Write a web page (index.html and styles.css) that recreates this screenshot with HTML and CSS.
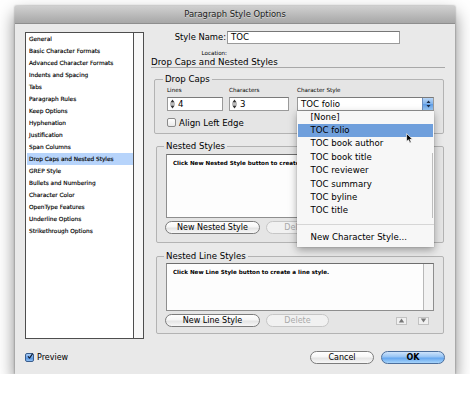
FILE: index.html
```html
<!DOCTYPE html>
<html>
<head>
<meta charset="utf-8">
<link rel="stylesheet" href="styles.css">
</head>
<body>
<div class="window">
  <div class="titlebar">Paragraph Style Options</div>
  <div class="content">
    <div class="sidebar">
      <ul class="list">
        <li>General</li>
        <li>Basic Character Formats</li>
        <li>Advanced Character Formats</li>
        <li>Indents and Spacing</li>
        <li>Tabs</li>
        <li>Paragraph Rules</li>
        <li>Keep Options</li>
        <li>Hyphenation</li>
        <li>Justification</li>
        <li>Span Columns</li>
        <li class="sel">Drop Caps and Nested Styles</li>
        <li>GREP Style</li>
        <li>Bullets and Numbering</li>
        <li>Character Color</li>
        <li>OpenType Features</li>
        <li>Underline Options</li>
        <li>Strikethrough Options</li>
      </ul>
      <div class="vscroll"></div>
    </div>
    <div class="main">
      <div class="name-row">
        <div class="name-label">Style Name:</div>
        <div class="text-input">TOC</div>
      </div>
      <div class="loc-row">Location:</div>
      <div class="heading">Drop Caps and Nested Styles</div>

      <fieldset class="group dropcaps">
        <legend>Drop Caps</legend>
        <div class="dc-inner">
          <div class="dc-row">
            <div class="dc-col col-lines">
              <div class="small-label">Lines</div>
              <div class="spin">
                <svg class="stepper" width="5" height="10" viewBox="0 0 5 10"><path d="M2.5 0.6 L0.3 3.6 L4.7 3.6 Z M2.5 9.4 L0.3 6.4 L4.7 6.4 Z" fill="#333"/><rect x="0" y="4.6" width="5" height="0.8" fill="#555"/></svg>
                <span class="spin-val">4</span>
              </div>
            </div>
            <div class="dc-col col-chars">
              <div class="small-label">Characters</div>
              <div class="spin">
                <svg class="stepper" width="5" height="10" viewBox="0 0 5 10"><path d="M2.5 0.6 L0.3 3.6 L4.7 3.6 Z M2.5 9.4 L0.3 6.4 L4.7 6.4 Z" fill="#333"/><rect x="0" y="4.6" width="5" height="0.8" fill="#555"/></svg>
                <span class="spin-val">3</span>
              </div>
            </div>
            <div class="dc-col col-style">
              <div class="small-label">Character Style</div>
              <div class="select">
                <span class="select-val">TOC folio</span>
                <span class="select-btn">
                  <svg width="5" height="8" viewBox="0 0 5 8"><path d="M2.5 0.5 L0.5 3 L4.5 3 Z M2.5 7.5 L0.5 5 L4.5 5 Z" fill="#1c2b45"/></svg>
                </span>
                <div class="menu">
                  <div class="mi">[None]</div>
                  <div class="mi hi">TOC folio</div>
                  <div class="mi">TOC book author</div>
                  <div class="mi">TOC book title</div>
                  <div class="mi">TOC reviewer</div>
                  <div class="mi">TOC summary</div>
                  <div class="mi">TOC byline</div>
                  <div class="mi">TOC title</div>
                  <div class="msep"></div>
                  <div class="mi mi-new">New Character Style...</div>
                  <div class="mscroll"></div>
                  <svg class="cursor" width="8" height="11" viewBox="0 0 8 11"><path d="M0.6 0.6 L0.6 8.6 L2.5 6.8 L3.9 9.9 L5.2 9.3 L3.9 6.3 L6.5 6.3 Z" fill="#000" stroke="#fff" stroke-width="0.7" stroke-linejoin="round"/></svg>
                </div>
              </div>
            </div>
          </div>
          <div class="check-row">
            <span class="checkbox"></span>
            <span>Align Left Edge</span>
          </div>
        </div>
      </fieldset>

      <fieldset class="group nested">
        <legend>Nested Styles</legend>
        <div class="listbox lb-nested">
          <div class="lb-text">Click New Nested Style button to create a nested style.</div>
          <div class="lb-scroll"></div>
        </div>
        <div class="btn-row">
          <span class="btn btn-new">New Nested Style</span>
          <span class="btn btn-del disabled">Delete</span>
          <span class="arrows">
            <span class="arrow-btn"><svg width="7" height="5" viewBox="0 0 7 5"><path d="M3.5 0.5 L0.8 4.5 L6.2 4.5 Z" fill="#777"/></svg></span>
            <span class="arrow-btn"><svg width="7" height="5" viewBox="0 0 7 5"><path d="M3.5 4.5 L0.8 0.5 L6.2 0.5 Z" fill="#777"/></svg></span>
          </span>
        </div>
      </fieldset>

      <fieldset class="group lines">
        <legend>Nested Line Styles</legend>
        <div class="listbox lb-lines">
          <div class="lb-text">Click New Line Style button to create a line style.</div>
          <div class="lb-scroll"></div>
        </div>
        <div class="btn-row">
          <span class="btn btn-new">New Line Style</span>
          <span class="btn btn-del disabled">Delete</span>
          <span class="arrows">
            <span class="arrow-btn"><svg width="7" height="5" viewBox="0 0 7 5"><path d="M3.5 0.5 L0.8 4.5 L6.2 4.5 Z" fill="#777"/></svg></span>
            <span class="arrow-btn"><svg width="7" height="5" viewBox="0 0 7 5"><path d="M3.5 4.5 L0.8 0.5 L6.2 0.5 Z" fill="#777"/></svg></span>
          </span>
        </div>
      </fieldset>
    </div>
  </div>
  <div class="footer">
    <span class="checkbox checked">
      <svg width="9" height="9" viewBox="0 0 9 9"><path d="M1.8 4.6 L3.8 7 L8.2 0.6" fill="none" stroke="#0d1a30" stroke-width="1.6" stroke-linecap="round" stroke-linejoin="round"/></svg>
    </span>
    <span class="preview-label">Preview</span>
    <span class="footer-buttons">
      <span class="btn btn-cancel">Cancel</span>
      <span class="btn btn-ok">OK</span>
    </span>
  </div>
</div>
</body>
</html>
```

FILE: styles.css
```css
* { box-sizing: border-box; }
html, body { margin: 0; padding: 0; background: #ffffff; }
body { font-family: "DejaVu Sans", "Liberation Sans", sans-serif; color: #000; }

.window {
  position: relative;
  margin: 6px 0 0 15px;
  width: 440px;
  height: 368px;
  background: #e9e9e9;
  box-shadow: 0 8px 16px rgba(0,0,0,0.5), 0 0 2px rgba(0,0,0,0.4);
  display: flex;
  flex-direction: column;
}

.titlebar {
  flex: none;
  height: 18px;
  background: linear-gradient(#d0d0d0, #a7a7a7);
  border-bottom: 1px solid #8e8e8e;
  font-size: 8.4px;
  line-height: 17px;
  text-align: center;
  color: #1c1c1c;
  text-shadow: 0 1px 0 rgba(255,255,255,0.45);
}

.content {
  flex: none;
  height: 315px;
  display: flex;
  align-items: flex-start;
}

/* sidebar list */
.sidebar {
  margin: 8px 0 0 10px;
  width: 119px;
  height: 307px;
  border: 1px solid #4e4e4e;
  background: #fff;
  display: flex;
}
.list { list-style: none; margin: 0; padding: 0; flex: 1; }
.list li {
  height: 12px;
  line-height: 12px;
  font-size: 5.8px;
  margin-left: 1px;
  padding-left: 2px;
  white-space: nowrap;
  -webkit-text-stroke: 0.15px #000;
}
.list li.sel { background: #b7d4fb; }
.vscroll { width: 10px; border-left: 1px solid #4e4e4e; background: #f7f7f7; }

/* main */
.main { margin-left: 7px; width: 294px; }

.name-row { margin-top: 7px; height: 13px; display: flex; }
.name-label {
  width: 76px;
  padding-right: 1px;
  text-align: right;
  font-size: 8.4px;
  line-height: 13px;
}
.text-input {
  width: 173px;
  height: 13px;
  background: #fff;
  border: 1px solid #9a9a9a;
  border-top-color: #777;
  font-size: 8.6px;
  line-height: 11px;
  padding-left: 3px;
}
.loc-row {
  margin-top: 4px;
  height: 10px;
  width: 76px;
  text-align: right;
  font-size: 5.6px;
  line-height: 10px;
}
.heading {
  height: 10px;
  font-size: 8.7px;
  line-height: 9px;
  border-bottom: 1px solid #a8a8a8;
}

/* group boxes */
.group {
  margin: 0;
  padding: 0;
  min-width: 0;
  border: 1px solid #b3b3b3;
  border-radius: 2px;
  background: rgba(0,0,0,0.015);
}
.group legend {
  padding: 0 2px;
  font-size: 8.6px;
  line-height: 10px;
}

.dropcaps { margin: 6px 1px 0 3px; height: 60px; }
.dropcaps legend { margin-left: 8px; }
.dc-inner { padding: 2.5px 0 0 12px; }
.dc-row { display: flex; }
.col-lines { width: 56px; margin-right: 6px; }
.col-chars { width: 60px; margin-right: 8px; }
.col-style { width: 137px; }
.small-label {
  height: 7px;
  line-height: 7px;
  font-size: 5.6px;
  margin-bottom: 3.2px;
  white-space: nowrap;
}
.spin {
  height: 14px;
  background: #fff;
  border: 1px solid #9a9a9a;
  border-top-color: #7a7a7a;
  display: flex;
  align-items: center;
}
.stepper { margin-left: 2px; flex: none; }
.spin-val { margin-left: 3px; font-size: 8.6px; line-height: 12px; }

.select {
  position: relative;
  height: 14px;
  background: #fff;
  border: 1px solid #9a9a9a;
  border-top-color: #7a7a7a;
  display: flex;
  align-items: center;
}
.select-val { flex: 1; padding-left: 3px; font-size: 8.6px; line-height: 12px; }
.select-btn {
  width: 11px;
  height: 12px;
  background: linear-gradient(#b9d6f6, #7fb2ec 50%, #5d9be4 52%, #9ccaf7);
  border-left: 1px solid #6c8fbf;
  display: flex;
  align-items: center;
  justify-content: center;
}

.menu {
  position: absolute;
  left: -1px;
  top: 13px;
  width: 137px;
  height: 136px;
  background: #f7f7f7;
  box-shadow: 0 3px 8px rgba(0,0,0,0.35), 0 0 1px rgba(0,0,0,0.3);
  z-index: 5;
}
.mi {
  height: 13.4px;
  line-height: 13.4px;
  font-size: 8.6px;
  padding-left: 12.5px;
  margin: 0 1px;
  white-space: nowrap;
}
.mi.hi { background: #6f9fdc; }
.msep { height: 1px; margin-top: 5.8px; background: #d6d6d6; }
.mi-new { margin-top: 6.3px; }
.mscroll {
  position: absolute;
  right: 1px;
  top: 42px;
  width: 1px;
  height: 65px;
  background: #bdbdbd;
}
.cursor { position: absolute; left: 109px; top: 22px; }

.check-row {
  margin-top: 7.3px;
  height: 10px;
  display: flex;
  align-items: center;
  font-size: 8.6px;
}
.checkbox {
  flex: none;
  width: 9px;
  height: 9px;
  border: 1px solid #8a8a8a;
  border-radius: 2px;
  background: linear-gradient(#ffffff, #e9e9e9);
  margin-right: 3px;
  display: inline-flex;
}

.nested { margin: 7px 1px 0 5px; height: 102px; }
.nested legend { margin-left: 7px; }
.lines { margin: 8px 1px 0 5px; height: 83px; }
.lines legend { margin-left: 7px; }

.listbox {
  position: relative;
  margin-left: 9px;
  width: 268px;
  background: #fdfdfd;
  border: 1px solid #8e8e8e;
  border-top-color: #6e6e6e;
  display: flex;
}
.lb-nested { margin-top: 3px; height: 64px; }
.lb-lines { margin-top: 2px; height: 48px; }
.lb-text {
  flex: 1;
  padding: 5px 0 0 6px;
  font-size: 5.6px;
  line-height: 7px;
  font-weight: bold;
  white-space: nowrap;
  overflow: hidden;
}
.lb-scroll { width: 10px; border-left: 1px solid #b8b8b8; background: #f2f2f2; }

.btn-row {
  margin: 3px 14px 0 8px;
  height: 13px;
  display: flex;
  align-items: center;
}
.btn {
  height: 13px;
  border: 1px solid #7c7c7c;
  border-radius: 7px;
  background: linear-gradient(#ffffff, #f6f6f6 45%, #e4e4e4 55%, #f7f7f7);
  font-size: 8px;
  line-height: 11px;
  text-align: center;
  white-space: nowrap;
}
.btn-new { width: 95px; }
.btn-del { width: 63px; margin-left: 6px; }
.btn.disabled { border-color: #c6c6c6; color: #a9a9a9; background: #f1f1f1; }
.arrows { margin-left: auto; display: flex; gap: 11px; }
.arrow-btn {
  width: 11px;
  height: 8px;
  border: 1px solid #c2c2c2;
  background: #f0f0f0;
  display: flex;
  align-items: center;
  justify-content: center;
}

/* footer */
.footer {
  flex: none;
  height: 35px;
  padding: 2px 10px 0 10px;
  display: flex;
  align-items: center;
}
.checkbox.checked {
  border-color: #3a5d8c;
  background: linear-gradient(#a9cdf6, #6ea4e8 50%, #4d8ee0 52%, #8fc0f4);
  align-items: center;
  justify-content: center;
}
.checkbox.checked svg { display: block; margin-top: -2px; margin-left: 1px; }
.preview-label { font-size: 8px; line-height: 11px; }
.footer-buttons { margin-left: auto; display: flex; gap: 7px; }
.btn-cancel { width: 64px; }
.btn-ok {
  width: 64px;
  border-color: #4d6f9c;
  background: linear-gradient(#cfe4fb, #95c3f4 45%, #66a7ef 55%, #a6d4fb);
  font-weight: bold;
}
```
